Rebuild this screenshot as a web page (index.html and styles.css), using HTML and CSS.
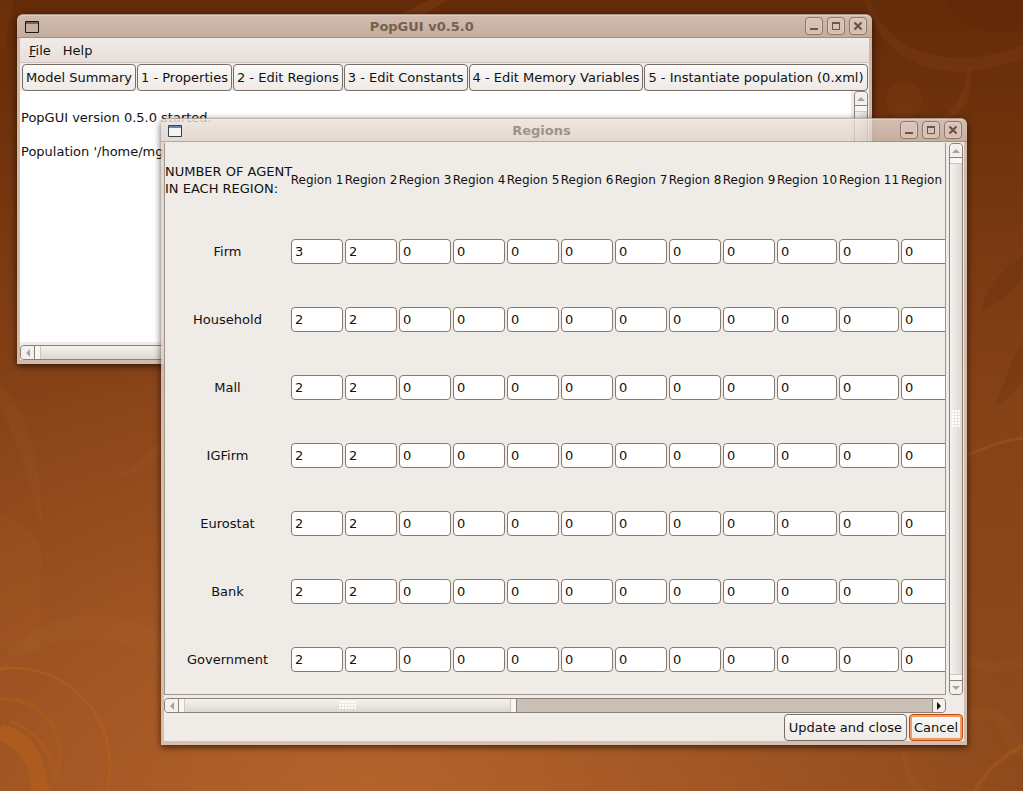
FILE: index.html
```html
<!DOCTYPE html>
<html lang="en">
<head>
<meta charset="utf-8">
<title>PopGUI v0.5.0</title>
<link rel="stylesheet" href="styles.css">
</head>
<body>
<div class="desktop">
  <svg class="wallpaper" viewBox="0 0 1023 791" preserveAspectRatio="none" aria-hidden="true">
    <g fill="none" stroke="#b8621c">
      <circle cx="13" cy="765" r="97" stroke-width="3" opacity=".5"/>
      <circle cx="5" cy="754" r="55" stroke-width="4" opacity=".35"/>
      <path d="M0 733C25 738 38 760 40 791" stroke-width="17" opacity=".55"/>
      <path d="M10 721C30 728 46 745 52 762" stroke-width="3" opacity=".4"/>
      <path d="M961 458C985 448 1000 441 1023 438" stroke-width="3" opacity=".3"/>
      <path d="M975 791C985 772 1000 757 1023 746" stroke-width="4" opacity=".3"/>
    </g>
    <g fill="#d08040">
      <path d="M0 385C25 410 42 450 42 530C30 480 15 430 0 410Z" opacity=".06"/>
      <path d="M0 512C25 525 42 540 42 560L40 650H0Z" opacity=".05"/>
      <path d="M0 660C40 610 110 600 161 635V660C100 625 40 635 0 675Z" opacity=".06"/>
      <path d="M95 475C125 478 145 462 161 440V456C145 472 125 480 95 475Z" opacity=".06"/>
      <path d="M870 0C890 60 960 70 1023 45V58C960 85 885 75 865 0Z" opacity=".07"/>
      <path d="M940 118C955 110 966 90 969 65C975 95 965 112 950 118Z" opacity=".07"/>
      <circle cx="904" cy="100" r="18" opacity=".05"/>
      <path d="M400 14L430 0H448L425 14Z" opacity=".12"/>
      <path d="M0 0H14L4 50H0Z" opacity=".06"/>
      <path d="M905 745C910 770 915 780 925 791H912C904 775 902 760 902 745Z" opacity=".06"/>
      <path d="M967 655C990 664 1010 664 1023 655V668C1005 676 985 672 967 665Z" opacity=".06"/>
      <path d="M967 722C990 710 1002 730 1010 752L1023 760V740C1010 715 995 700 967 712Z" opacity=".05"/>
    </g>
    <g fill="#401800">
      <path d="M1023 255C1005 270 985 285 982 310C998 305 1012 292 1023 275Z" opacity=".1"/>
      <path d="M1023 340C1010 360 1005 385 994 405C1008 402 1017 390 1023 380Z" opacity=".12"/>
      <path d="M945 0H1023V30C990 38 960 30 945 0Z" opacity=".08"/>
    </g>
  </svg>

  <section class="window window-main" aria-label="PopGUI v0.5.0">
    <header class="titlebar">
      <svg class="app-icon" viewBox="0 0 15 13" aria-hidden="true"><path d="M1.500 1.500H14.500V12.500H1.500Z" fill="#c4b0a3" stroke="#1c1a18"/><path d="M2 3H14" stroke="#1c1a18"/></svg>
      <h1 class="title">PopGUI v0.5.0</h1>
      <div class="controls">
        <button class="control" aria-label="Minimize"><svg viewBox="0 0 10 10"><path d="M1 8H9" stroke="currentColor" stroke-width="2"/></svg></button>
        <button class="control" aria-label="Maximize"><svg viewBox="0 0 10 10"><path d="M1.500 1.500H8.500V8.500H1.500Z" fill="none" stroke="currentColor"/><path d="M1 2H9" stroke="currentColor" stroke-width="2"/></svg></button>
        <button class="control" aria-label="Close"><svg viewBox="0 0 10 10"><path d="M1.500 1.500L8.500 8.500M8.500 1.500L1.500 8.500" stroke="currentColor" stroke-width="2.200"/></svg></button>
      </div>
    </header>
    <div class="frame">
      <nav class="menubar">
        <button class="menu"><u>F</u>ile</button>
        <button class="menu">Help</button>
      </nav>
      <div class="toolbar">
        <button class="button">Model Summary</button>
        <button class="button">1 - Properties</button>
        <button class="button">2 - Edit Regions</button>
        <button class="button">3 - Edit Constants</button>
        <button class="button">4 - Edit Memory Variables</button>
        <button class="button">5 - Instantiate population (0.xml)</button>
      </div>
      <div class="scroller">
        <div class="log"><p>PopGUI version 0.5.0 started.</p><p>Population '/home/mgc</p></div>
        <div class="bar vertical">
          <button class="step" aria-label="Scroll up" disabled><svg viewBox="0 0 8 8"><path d="M0 6L4 2L8 6Z"/></svg></button>
          <div class="thumb"></div>
          <button class="step" aria-label="Scroll down" disabled><svg viewBox="0 0 8 8"><path d="M0 2L4 6L8 2Z"/></svg></button>
        </div>
        <div class="bar horizontal">
          <button class="step" aria-label="Scroll left" disabled><svg viewBox="0 0 8 8"><path d="M6 0L2 4L6 8Z"/></svg></button>
          <div class="thumb"></div>
          <button class="step" aria-label="Scroll right" disabled><svg viewBox="0 0 8 8"><path d="M2 0L6 4L2 8Z"/></svg></button>
        </div>
      </div>
    </div>
  </section>

  <section class="window window-regions" aria-label="Regions">
    <header class="titlebar">
      <svg class="app-icon" viewBox="0 0 15 13" aria-hidden="true"><path d="M.5 1.500H13.500V12.500H.5Z" fill="#f4f4f4" stroke="#3a4048"/><path d="M1 3H13" stroke="#6487b5" stroke-width="2"/></svg>
      <h2 class="title">Regions</h2>
      <div class="controls">
        <button class="control" aria-label="Minimize"><svg viewBox="0 0 10 10"><path d="M1 8H9" stroke="currentColor" stroke-width="2"/></svg></button>
        <button class="control" aria-label="Maximize"><svg viewBox="0 0 10 10"><path d="M1.500 1.500H8.500V8.500H1.500Z" fill="none" stroke="currentColor"/><path d="M1 2H9" stroke="currentColor" stroke-width="2"/></svg></button>
        <button class="control" aria-label="Close"><svg viewBox="0 0 10 10"><path d="M1.500 1.500L8.500 8.500M8.500 1.500L1.500 8.500" stroke="currentColor" stroke-width="2.200"/></svg></button>
      </div>
    </header>
    <div class="frame">
      <div class="scroller">
        <div class="viewport">
          <table class="grid">
            <thead><tr id="head"><th class="corner" scope="col">NUMBER OF AGENT<br>IN EACH REGION:</th></tr></thead>
            <tbody id="rows"></tbody>
          </table>
        </div>
        <div class="bar vertical">
          <button class="step" aria-label="Scroll up" disabled><svg viewBox="0 0 8 8"><path d="M0 6L4 2L8 6Z"/></svg></button>
          <div class="thumb"><span class="grip"></span></div>
          <button class="step" aria-label="Scroll down" disabled><svg viewBox="0 0 8 8"><path d="M0 2L4 6L8 2Z"/></svg></button>
        </div>
        <div class="bar horizontal">
          <button class="step" aria-label="Scroll left" disabled><svg viewBox="0 0 8 8"><path d="M6 0L2 4L6 8Z"/></svg></button>
          <div class="thumb partial"><span class="grip"></span></div>
          <button class="step step-end" aria-label="Scroll right"><svg viewBox="0 0 8 8"><path d="M2 0L6 4L2 8Z"/></svg></button>
        </div>
      </div>
      <footer class="actions">
        <button class="button">Update and close</button>
        <button class="button focused">Cancel</button>
      </footer>
    </div>
  </section>
</div>
<script src="script.js"></script>
</body>
</html>
```
FILE: styles.css
```css
* {
  box-sizing: border-box;
}

body {
  margin: 0;
  font: 13px/17px "DejaVu Sans", sans-serif;
  color: #111;
}

button,
input {
  font: inherit;
  color: inherit;
}

.desktop {
  position: relative;
  min-height: 100vh;
  overflow: hidden;
  background:
    radial-gradient(ellipse 65% 65% at 36% 105%, rgba(200, 112, 52, .7), rgba(190, 100, 44, 0)),
    linear-gradient(#642b08, #864217 50%, #8f4a1c);
}

.wallpaper {
  position: absolute;
  inset: 0;
  width: 100%;
  height: 100%;
}

/* Windows */
.window {
  position: absolute;
  border-radius: 6px 6px 0 0;
  box-shadow: 0 2px 7px rgba(0, 0, 0, .65);
}

.window-main {
  left: 17px;
  top: 14px;
  width: max-content;
}

.window-regions {
  left: 161px;
  top: 118px;
  width: calc(100% - 217px);
}

.titlebar {
  display: flex;
  align-items: center;
  height: 24px;
  padding: 0 5px 0 7px;
  border: solid rgba(120, 95, 80, .4);
  border-width: 1px 0;
  border-radius: 6px 6px 0 0;
  box-shadow: inset 0 1px rgba(255, 255, 255, .3);
  background: linear-gradient(rgba(236, 226, 220, .8), rgba(220, 204, 192, .8));
  background-origin: border-box;
}

.app-icon {
  width: 15px;
  height: 13px;
}

.title {
  flex: 1;
  margin: 0;
  font-size: 13px;
  line-height: 17px;
  text-align: center;
  color: #77604f;
}

.window-regions .title {
  color: #9b948c;
}

.controls {
  display: flex;
  gap: 4px;
}

.control {
  display: grid;
  place-items: center;
  width: 18px;
  height: 18px;
  padding: 0;
  border: 1px solid #8d7565;
  border-radius: 4px;
  box-shadow: inset 0 0 0 1px rgba(255, 255, 255, .2);
  background: rgba(230, 212, 202, .4);
  color: #6d5444;
}

.control svg {
  width: 10px;
  height: 10px;
}

.frame {
  border: solid rgba(226, 208, 197, .85);
  border-width: 0 3px 4px;
  background: #efebe7;
  background-clip: padding-box;
}

/* Main window */
.menubar {
  display: flex;
  gap: 12px;
  height: 25px;
  padding: 0 9px;
  border-bottom: 1px solid #cfc6bf;
  background: linear-gradient(#f0ece8, #e8dfd9);
}

.menu {
  padding: 0;
  border: 0;
  background: none;
}

.toolbar {
  display: flex;
  gap: 1px;
  padding: 1px 1px 0 2px;
}

.button {
  padding: 4px;
  border: 1px solid #776d66;
  border-radius: 4px;
  box-shadow: inset 0 1px #fff;
  background: linear-gradient(#faf9f8, #f3f1ee 50%, #eeebe7);
  white-space: nowrap;
}

.toolbar .button {
  padding: 4px 3px;
}

.focused {
  border-color: #b94a16;
  box-shadow: inset 0 0 0 2px #f59a63;
}

.scroller {
  display: grid;
  grid-template-columns: minmax(0, 1fr) 14px;
  gap: 3px;
  padding-right: 1px;
}

.log {
  min-height: 251px;
  padding: 18px 1px;
  overflow: hidden;
  background: #fff;
  white-space: nowrap;
}

.log p {
  margin: 0 0 17px;
}

/* Scrollbars */
.bar {
  display: flex;
  min-width: 0;
  border: 1px solid #8b8179;
  border-radius: 4px;
  background: #c9c0b5;
  overflow: hidden;
}

.horizontal {
  height: 15px;
}

.vertical {
  flex-direction: column;
}

.step {
  display: grid;
  place-items: center;
  flex: 0 0 13px;
  min-width: 12px;
  min-height: 13px;
  padding: 0;
  border: 0;
  background: #f3f1ee;
  color: #111;
}

.step:disabled {
  color: #aaa49c;
}

.step-end {
  border-left: 1px solid #8b8179;
}

.step svg {
  width: 8px;
  height: 8px;
  fill: currentColor;
}

.thumb {
  display: grid;
  place-items: center;
  flex: 1;
}

.horizontal .thumb {
  border: solid #8b8179;
  border-width: 0 1px;
  background:
    linear-gradient(90deg, #f8f6f4 5px, #cfc8c0 5px 6px, transparent 6px calc(100% - 6px), #cfc8c0 calc(100% - 6px) calc(100% - 5px), #f8f6f4 calc(100% - 5px)),
    linear-gradient(#f5f3f0, #ddd7d0);
}

.vertical .thumb {
  border: solid #8b8179;
  border-width: 1px 0;
  background:
    linear-gradient(#f8f6f4 5px, #cfc8c0 5px 6px, transparent 6px calc(100% - 6px), #cfc8c0 calc(100% - 6px) calc(100% - 5px), #f8f6f4 calc(100% - 5px)),
    linear-gradient(90deg, #f5f3f0, #ddd7d0);
}

.horizontal .partial {
  flex: 0 0 calc(43% + 4px);
  margin-right: auto;
}

.grip {
  width: 18px;
  height: 9px;
  background: radial-gradient(circle at 1px 1px, #fff 1px, transparent 1px) 0 0 / 3px 3px;
}

.vertical .grip {
  width: 9px;
  height: 18px;
}

/* Regions window */
.viewport {
  overflow: hidden;
  padding-bottom: 1px;
  border: 1px solid #9e948b;
  border-top: 0;
}

.window-regions .scroller {
  padding-top: 1px;
}

.grid {
  table-layout: fixed;
  width: 1px;
  border-collapse: collapse;
}

.grid th,
.grid td {
  width: 54px;
  height: 68px;
  padding: 0 1px;
  font-weight: normal;
  white-space: nowrap;
}

.grid thead th {
  height: 74px;
  padding: 0;
  font-size: 12px;
}

.grid thead .wide {
  width: 62px;
}

.grid thead .corner {
  width: 125px;
  font-size: 13px;
  text-align: left;
}

.field {
  display: block;
  width: 100%;
  height: 25px;
  padding: 0 3px;
  border: 1px solid #877970;
  border-radius: 4px;
  background: #fff;
}

.actions {
  display: flex;
  justify-content: flex-end;
  gap: 2px;
  padding: 1px 1px 0;
}
```
FILE: script.js
```js
const agents = {
  Firm: 3,
  Household: 2,
  Mall: 2,
  IGFirm: 2,
  Eurostat: 2,
  Bank: 2,
  Government: 2
};
const regionCount = 12;
const head = document.getElementById("head");
const rows = document.getElementById("rows");

for (let region = 1; region <= regionCount; region++) {
  const cell = document.createElement("th");
  cell.scope = "col";
  cell.className = region > 9 ? "wide" : "";
  cell.textContent = "Region " + region;
  head.append(cell);
}

for (const [name, first] of Object.entries(agents)) {
  const row = rows.insertRow();
  const label = document.createElement("th");
  label.scope = "row";
  label.textContent = name;
  row.append(label);
  for (let region = 1; region <= regionCount; region++) {
    const field = document.createElement("input");
    field.className = "field";
    field.type = "text";
    field.value = region === 1 ? first : region === 2 ? 2 : 0;
    field.setAttribute("aria-label", name + ", region " + region);
    row.insertCell().append(field);
  }
}
```
